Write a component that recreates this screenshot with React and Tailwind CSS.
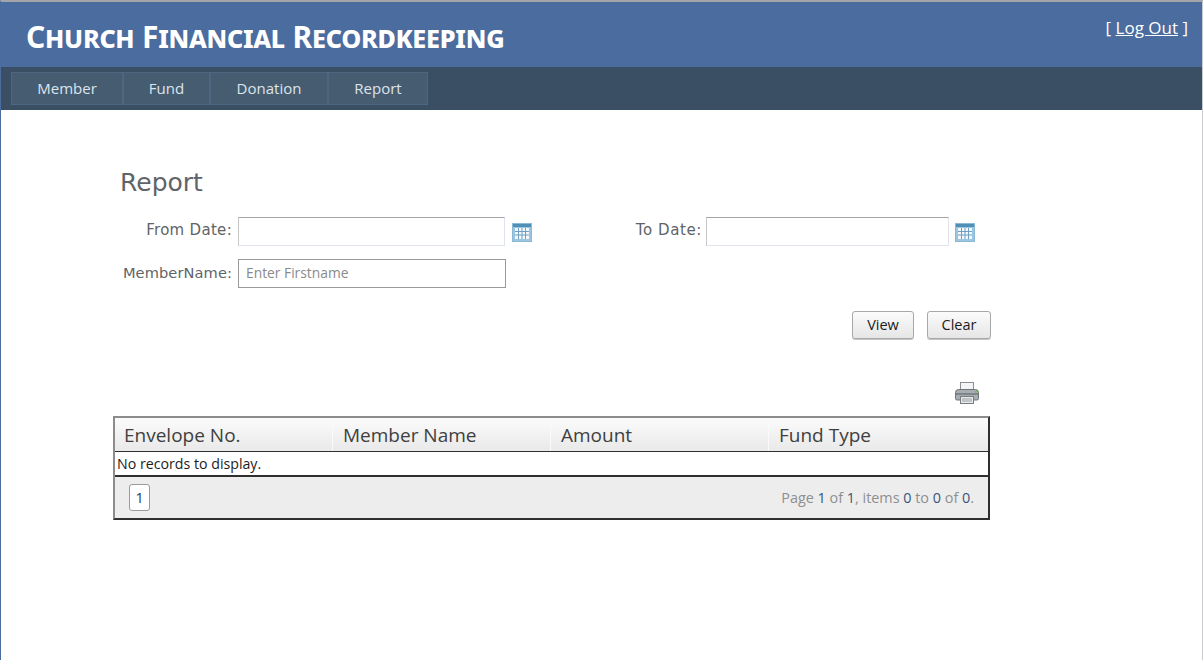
const F = { fontFamily: '"Open Sans", "Noto Sans", sans-serif' };
const D = { fontFamily: '"DejaVu Sans", sans-serif' };

function Cal({ className = "" }) {
  return (
    <svg width="20" height="19" viewBox="0 0 20 19" className={className}>
      <rect x="0.5" y="0.5" width="19" height="18" fill="#9cc6e0" stroke="#8ab8d6" />
      <rect x="1" y="1" width="18" height="3" fill="#4f8fb8" />
      <rect x="3" y="5" width="14" height="11" fill="#f4f8fb" />
      <path d="M6.5 5v11M10 5v11M13.5 5v11M3 8.5h14M3 12h14" stroke="#6f9fc4" strokeWidth="1" />
    </svg>
  );
}

function Printer() {
  return (
    <svg width="26" height="24" viewBox="0 0 26 24">
      <rect x="6.5" y="1.5" width="13" height="9" fill="#f4f4f4" stroke="#8a8f93" />
      <path d="M1.500 11.500q0-3 3-3h17q3 0 3 3v6q0 1.500-1.500 1.500H3Q1.500 19 1.500 17.500z" fill="#a8adb1" stroke="#6e7478" />
      <rect x="2" y="12" width="22" height="2" fill="#7f8589" />
      <rect x="21" y="10" width="2" height="1.500" fill="#6fc04a" />
      <rect x="6.500" y="15.500" width="13" height="7" fill="#e8e8e8" stroke="#777c80" />
      <path d="M8 18h10M8 20h10" stroke="#9ca0a3" />
    </svg>
  );
}

export default function App() {
  return (
    <div style={F} className="h-[660px] overflow-hidden bg-white border-t-2 border-t-[#a3a5a8] border-l border-l-[#4b6c9e] border-r border-r-[#c9ccd0]">
      <header className="h-[65px] bg-[#4b6c9e] flex justify-between pl-[25px] pr-[14px]">
        <h1 className="mt-[15px] text-[30px] leading-[40px] font-bold text-white [font-variant:small-caps] tracking-[-0.25px]" style={{ fontFamily: '"Noto Sans", sans-serif' }}>
          Church Financial Recordkeeping
        </h1>
        <div className="mt-[15px] text-[17px] leading-[22px] text-white">
          [ <a className="underline">Log Out</a> ]
        </div>
      </header>
      <nav className="h-[43px] bg-[#3a4f63] pl-[10px] pt-[5px]">
        <ul className="flex h-[33px] w-fit border border-[#4f6680] bg-[#465c71] text-[15px] text-[#dde4ec]">
          <li className="w-[112px] flex items-center justify-center border-r-2 border-[#4f6680]">Member</li>
          <li className="w-[87px] flex items-center justify-center border-r-2 border-[#4f6680]">Fund</li>
          <li className="w-[118px] flex items-center justify-center border-r-2 border-[#4f6680]">Donation</li>
          <li className="w-[98px] flex items-center justify-center">Report</li>
        </ul>
      </nav>

      <main className="pl-[113px] w-[990px]">
        <h2 className="mt-[53px] ml-[6px] leading-[40px] text-[#5f6467]" style={{ ...D, fontSize: 25 }}>Report</h2>

        <div className="mt-[14px] flex items-center h-[29px]" style={D}>
          <label className="w-[118px] text-right text-[15px] text-[#5f6467] tracking-[0.3px] pb-[2px]">From Date:</label>
          <div className="ml-[6px] w-[267px] h-[29px] border border-[#dfe3ec] border-t-[#a5a5a5] border-l-[#c8c8c8] bg-white" />
          <Cal className="ml-[7px] mt-[2px]" />
          <label className="w-[170px] text-right text-[15px] text-[#5f6467] tracking-[0.6px] pb-[2px]">To Date:</label>
          <div className="ml-[4px] w-[243px] h-[29px] border border-[#dfe3ec] border-t-[#a5a5a5] border-l-[#c8c8c8] bg-white" />
          <Cal className="ml-[6px] mt-[2px]" />
        </div>

        <div className="mt-[13px] flex items-center h-[29px]">
          <label className="w-[118px] text-right text-[14.6px] text-[#5f6467] tracking-[0.1px] pb-[2px]" style={D}>MemberName:</label>
          <div className="ml-[6px] w-[268px] h-[29px] border border-[#9a9a9a] flex items-center pl-[7px] text-[13.8px] text-[#8a8a8a]">Enter Firstname</div>
        </div>

        <div className="mt-[23px] flex justify-end gap-[13px]">
          <button className="w-[62px] h-[28px] rounded-[3px] border border-[#a8a8a8] bg-gradient-to-b from-[#fbfbfb] to-[#e6e6e6] text-[14.5px] text-[#1b1b1b] shadow-[0_1px_0_#c4c4c4]">View</button>
          <button className="w-[64px] h-[28px] rounded-[3px] border border-[#a8a8a8] bg-gradient-to-b from-[#fbfbfb] to-[#e6e6e6] text-[14.5px] text-[#1b1b1b] shadow-[0_1px_0_#c4c4c4]">Clear</button>
        </div>

        <div className="mt-[42px] flex justify-end pr-[11px] h-[25px]">
          <Printer />
        </div>

        <div className="mt-[10px] -ml-[1px] w-[877px] border-2 border-[#2f2f2f] border-t-[#8c8c8c] border-l-[#8c8c8c]">
          <div className="grid grid-cols-[218px_218px_218px_1fr] h-[33px] bg-gradient-to-b from-[#fbfbfb] to-[#e9e9e9] text-[19px] text-[#3f3f3f]">
            <div className="pl-[9px] flex items-center border-r border-r-[#fafafa] pt-[2px]">Envelope No.</div>
            <div className="pl-[10px] flex items-center border-r border-r-[#fafafa] pt-[2px]">Member Name</div>
            <div className="pl-[10px] flex items-center border-r border-r-[#fafafa] pt-[2px]">Amount</div>
            <div className="pl-[10px] flex items-center pt-[2px]">Fund Type</div>
          </div>
          <div className="h-[24px] flex items-center pl-[2px] text-[14.2px] text-[#1c1c1c] bg-white border-t border-t-[#2f2f2f]">No records to display.</div>
          <div className="h-[43px] bg-[#ededed] border-t-2 border-t-[#2f2f2f] flex items-center justify-between pl-[14px] pr-[14px]">
            <div className="w-[21px] h-[27px] bg-white border border-[#9a9a9a] rounded-[3px] flex items-center justify-center text-[14.4px] text-[#1f3a5f]">1</div>
            <div className="text-[14.4px] text-[#8f8f8f]">
              Page <span className="text-[#3a5578]">1</span> of <span className="text-[#3a5578]">1</span>, items <span className="text-[#3a5578]">0</span> to <span className="text-[#3a5578]">0</span> of <span className="text-[#3a5578]">0</span>.
            </div>
          </div>
        </div>
      </main>
    </div>
  );
}
